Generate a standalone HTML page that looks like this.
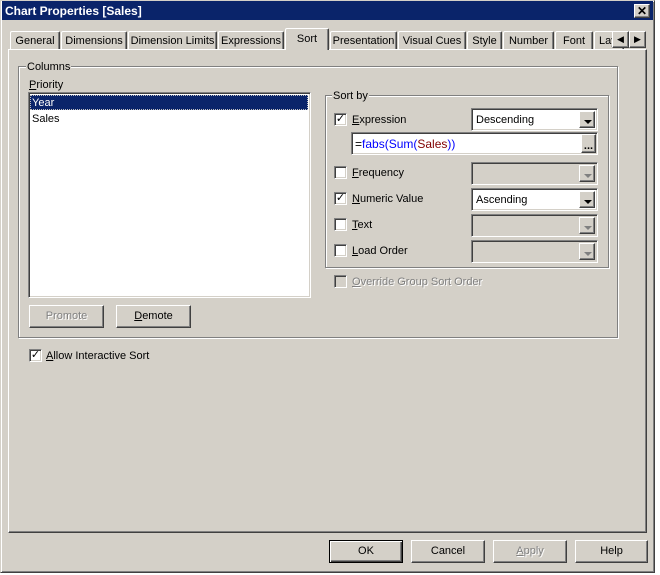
<!DOCTYPE html>
<html><head><style>
*{box-sizing:border-box}
body{margin:0;width:660px;height:575px;background:#fff;font-family:"Liberation Sans",sans-serif;font-size:11px;color:#000;position:relative;overflow:hidden}
.a{position:absolute}
.t{margin-top:1px}
.dlg{left:0;top:0;width:655px;height:573px;background:#d4d0c8;border:1px solid;border-color:#d4d0c8 #404040 #404040 #d4d0c8;box-shadow:inset 1px 1px #fff,inset -1px -1px #808080}
.title{left:2px;top:1px;width:651px;height:19px;background:#0a246a;color:#fff;font-weight:bold;font-size:12px;line-height:20px;padding-left:3px}
.btn{background:#d4d0c8;border:1px solid;border-color:#fff #404040 #404040 #fff;box-shadow:inset -1px -1px #808080;text-align:center;line-height:21px}
.tab{top:31px;height:18px;border:1px solid;border-color:#fff #404040 transparent #fff;border-bottom:none;box-shadow:inset -1px 0 #808080;line-height:18px;text-align:center;border-radius:2px 2px 0 0}
.grp{border:1px solid #808080;box-shadow:1px 1px #fff,inset 1px 1px #fff}
.lbl{background:#d4d0c8;padding:0 1px;line-height:12px}
.sunk{background:#fff;border:1px solid;border-color:#808080 #fff #fff #808080;box-shadow:inset 1px 1px #404040,inset -1px -1px #d4d0c8}
.cb{width:13px;height:13px}
.cbx{font-size:11px;line-height:11px;text-align:center}
.dis{color:#808080;text-shadow:1px 1px #fff}
.arr{width:0;height:0;border-left:4px solid transparent;border-right:4px solid transparent;border-top:4px solid #000;position:absolute;left:4px;top:8px}
.combo .dd{position:absolute;right:2px;top:2px;width:16px;bottom:2px}
u{text-decoration:underline}
</style></head><body>
<div class="a dlg"></div>
<div class="a title">Chart Properties [Sales]</div>
<div class="a btn" style="left:634px;top:4px;width:16px;height:14px;line-height:12px;font-weight:bold;font-size:12px">✕</div>

<div class="a" style="left:8px;top:49px;width:639px;height:484px;border:1px solid;border-color:#fff #404040 #404040 #fff;box-shadow:inset -1px -1px #808080"></div>
<div class="a tab" style="left:10px;width:50px">General</div>
<div class="a tab" style="left:61px;width:66px">Dimensions</div>
<div class="a tab" style="left:128px;width:89px">Dimension Limits</div>
<div class="a tab" style="left:218px;width:66px">Expressions</div>
<div class="a tab" style="left:285px;top:28px;height:22px;width:44px;background:#d4d0c8;line-height:20px">Sort</div>
<div class="a tab" style="left:330px;width:67px">Presentation</div>
<div class="a tab" style="left:398px;width:68px">Visual Cues</div>
<div class="a tab" style="left:467px;width:35px">Style</div>
<div class="a tab" style="left:503px;width:51px">Number</div>
<div class="a tab" style="left:555px;width:38px">Font</div>
<div class="a tab" style="left:594px;width:30px;text-align:left;padding-left:4px;overflow:hidden">Layout</div>
<div class="a btn" style="left:612px;top:31px;width:17px;height:17px;line-height:15px;font-size:9px">◀</div>
<div class="a btn" style="left:629px;top:31px;width:17px;height:17px;line-height:15px;font-size:9px">▶</div>

<div class="a grp" style="left:18px;top:66px;width:600px;height:272px"></div>
<div class="a lbl" style="left:26px;top:61px">Columns</div>
<div class="a" style="left:29px;top:79px"><u>P</u>riority</div>
<div class="a sunk" style="left:28px;top:92px;width:283px;height:206px"></div>
<div class="a" style="left:30px;top:95px;width:278px;height:15px;background:#0a246a;color:#fff;padding-left:2px;line-height:16px;outline:1px dotted #c0c0c0;outline-offset:-1px">Year</div>
<div class="a" style="left:32px;top:113px">Sales</div>
<div class="a btn dis" style="left:29px;top:305px;width:75px;height:23px">Promote</div>
<div class="a btn" style="left:116px;top:305px;width:75px;height:23px"><u>D</u>emote</div>

<div class="a grp" style="left:325px;top:95px;width:284px;height:173px"></div>
<div class="a lbl" style="left:332px;top:90px">Sort by</div>

<div class="a sunk cb cbx" style="left:334px;top:113px">✓</div>
<div class="a" style="left:352px;top:114px"><u>E</u>xpression</div>
<div class="a sunk combo" style="left:471px;top:108px;width:127px;height:23px;padding:5px 0 0 4px">Descending<div class="btn dd"><div class="arr"></div></div></div>
<div class="a sunk" style="left:351px;top:132px;width:247px;height:23px;padding:4px 0 0 3px;font-size:12px"><span>=</span><span style="color:#00f">fabs(Sum(</span><span style="color:#800000">Sales</span><span style="color:#00f">))</span></div>
<div class="a btn" style="left:581px;top:134px;width:15px;height:19px;line-height:22px;font-weight:bold">...</div>

<div class="a sunk cb" style="left:334px;top:166px"></div>
<div class="a" style="left:352px;top:167px"><u>F</u>requency</div>
<div class="a sunk combo" style="left:471px;top:162px;width:127px;height:23px;background:#d4d0c8"><div class="btn dd"><div class="arr" style="border-top-color:#808080"></div></div></div>

<div class="a sunk cb cbx" style="left:334px;top:192px">✓</div>
<div class="a" style="left:352px;top:193px"><u>N</u>umeric Value</div>
<div class="a sunk combo" style="left:471px;top:188px;width:127px;height:23px;padding:5px 0 0 4px">Ascending<div class="btn dd"><div class="arr"></div></div></div>

<div class="a sunk cb" style="left:334px;top:218px"></div>
<div class="a" style="left:352px;top:219px"><u>T</u>ext</div>
<div class="a sunk combo" style="left:471px;top:214px;width:127px;height:23px;background:#d4d0c8"><div class="btn dd"><div class="arr" style="border-top-color:#808080"></div></div></div>

<div class="a sunk cb" style="left:334px;top:244px"></div>
<div class="a" style="left:352px;top:245px"><u>L</u>oad Order</div>
<div class="a sunk combo" style="left:471px;top:240px;width:127px;height:23px;background:#d4d0c8"><div class="btn dd"><div class="arr" style="border-top-color:#808080"></div></div></div>

<div class="a sunk cb" style="left:334px;top:275px;background:#d4d0c8"></div>
<div class="a dis" style="left:352px;top:276px"><u>O</u>verride Group Sort Order</div>

<div class="a sunk cb cbx" style="left:29px;top:349px">✓</div>
<div class="a" style="left:46px;top:350px"><u>A</u>llow Interactive Sort</div>

<div class="a btn" style="left:329px;top:540px;width:74px;height:23px;border:1px solid #000;box-shadow:inset 1px 1px #fff,inset -1px -1px #404040,inset -2px -2px #808080">OK</div>
<div class="a btn" style="left:411px;top:540px;width:74px;height:23px">Cancel</div>
<div class="a btn dis" style="left:493px;top:540px;width:74px;height:23px"><u>A</u>pply</div>
<div class="a btn" style="left:575px;top:540px;width:73px;height:23px">Help</div>
</body></html>
